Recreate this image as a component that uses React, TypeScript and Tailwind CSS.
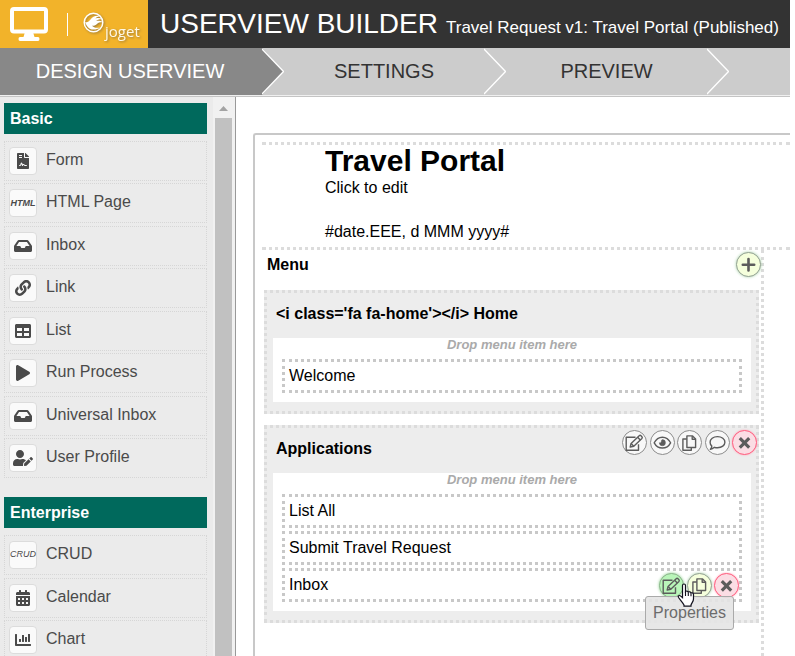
import type { ReactNode } from "react";
import {
  FaCalendarAlt,
  FaChartBar,
  FaFileContract,
  FaInbox,
  FaLink,
  FaPlay,
  FaTable,
  FaUserEdit,
} from "react-icons/fa";

type PaletteItem = { label: string; icon: ReactNode };

const basicItems: PaletteItem[] = [
  { label: "Form", icon: <FaFileContract size={16} /> },
  { label: "HTML Page", icon: <i className="text-[9px] font-bold">HTML</i> },
  { label: "Inbox", icon: <FaInbox size={18} /> },
  { label: "Link", icon: <FaLink size={16} /> },
  { label: "List", icon: <FaTable size={16} /> },
  { label: "Run Process", icon: <FaPlay size={16} /> },
  { label: "Universal Inbox", icon: <FaInbox size={18} /> },
  { label: "User Profile", icon: <FaUserEdit size={20} /> },
];

const enterpriseItems: PaletteItem[] = [
  { label: "CRUD", icon: <i className="text-[9px]">CRUD</i> },
  { label: "Calendar", icon: <FaCalendarAlt size={16} /> },
  { label: "Chart", icon: <FaChartBar size={16} /> },
];

const stroke = {
  width: 23,
  height: 23,
  viewBox: "0 0 23 23",
  fill: "none",
  stroke: "currentColor",
  strokeWidth: 1.4,
  strokeLinejoin: "round" as const,
};

const EditIcon = () => (
  <svg {...stroke}>
    <path d="M12.5 6.3H3.2v12.9h12.3v-6" />
    <path d="M7.2 16l.9-3.6 8.1-7.7c.6-.5 1.3-.4 1.8.1l.9 1c.5.6.5 1.2 0 1.7l-8.1 7.7z" />
    <path d="M14.6 6.2l2.7 2.9M8.1 12.4l2.7 2.8" />
  </svg>
);

const EyeIcon = () => (
  <svg {...stroke}>
    <path d="M3.2 11.8C7 4.3 15.8 4.3 19.6 11.8C15.8 18.8 7 18.8 3.2 11.8z" />
    <path d="M11.4 8.6a3.1 3.1 0 1 1-3.1 3.1c.9.4 1.9-.1 2-1.1.1-.9.2-1.8 1.1-2z" fill="currentColor" strokeWidth="0.4" />
  </svg>
);

const CopyIcon = () => (
  <svg {...stroke}>
    <path d="M8.8 8H4.9v11.3h8.4v-2.8" />
    <path d="M8.9 4.9h5.7l3 3v8.6H8.9z" />
    <path d="M14.2 4.9v3.4h3.4" />
  </svg>
);

const CommentIcon = () => (
  <svg {...stroke}>
    <path d="M11.5 5.6c4.3 0 7.4 2.5 7.4 5.6s-3.1 5.6-7.4 5.6c-1.2 0-2.2-.2-3.1-.5-1 .9-2.2 1.8-4 2 .9-.9 1.4-2 1.4-3.2-1.1-1-1.7-2.4-1.7-3.9 0-3.1 3.1-5.6 7.4-5.6z" />
  </svg>
);

const CloseIcon = () => (
  <svg {...stroke} strokeWidth={3.2}>
    <path d="M6.8 7.2l9.4 9.4M16.2 7.2l-9.4 9.4" />
  </svg>
);

const PlusIcon = () => (
  <svg {...stroke} strokeWidth={2.6} strokeLinecap="round">
    <path d="M11.5 6v11.5M5.8 11.8h11.4" />
  </svg>
);

const tones = {
  plain: "border-[#8c8c8c] bg-[#f8f8f8]",
  lime: "border-[#93a093] bg-[#f5ffdc] shadow-[0_0_3px_#a9d3a9]",
  green: "border-[#8bb38b] bg-[#b9f5b9] shadow-[0_0_3px_#8fcf8f]",
  red: "border-[#ff5f80] bg-[#fbdde4] shadow-[0_0_2px_#ff9fb2]",
};

function RoundButton({ label, tone, children }: { label: string; tone: keyof typeof tones; children: ReactNode }) {
  return (
    <button
      type="button"
      aria-label={label}
      className={`flex size-[25px] shrink-0 items-center justify-center rounded-full border text-[#5c5c5c] ${tones[tone]}`}
    >
      {children}
    </button>
  );
}

function Chevron({ fill }: { fill: string }) {
  return (
    <svg width="22" height="47" viewBox="0 0 22 47" className="shrink-0">
      <path d="M0 0v47L21.5 23.5z" fill={fill} />
      <path d="M0 1L21.5 23.5L0 46" fill="none" stroke="#fff" strokeWidth="1.3" />
    </svg>
  );
}

function Palette({ title, items, height }: { title: string; items: PaletteItem[]; height: string }) {
  return (
    <section>
      <h3 className="mb-[7px] bg-[#00695c] px-1.5 text-base leading-[31px] font-bold text-white">{title}</h3>
      <ul className={`grid content-between ${height}`}>
        {items.map((item) => (
          <li key={item.label} className="flex h-10 items-center gap-[9px] border border-dotted border-[#d6d6d6] px-1">
            <span className="flex size-7 shrink-0 items-center justify-center rounded-[4px] border border-[#dcdcdc] bg-[#fafafa]">
              {item.icon}
            </span>
            <span className="pb-0.5">{item.label}</span>
          </li>
        ))}
      </ul>
    </section>
  );
}

function Category({ title, actions, children }: { title: string; actions?: ReactNode; children: ReactNode }) {
  return (
    <section className="border-3 border-dotted border-[#dcdcdc] bg-[#ededed] pr-[5px] pb-[9px] pl-1.5">
      <div className="flex h-[45px] items-start justify-between pl-[3px]">
        <h4 className="leading-[42px] font-bold">{title}</h4>
        {actions}
      </div>
      <div className="bg-white px-[9px] pb-[9px]">
        <p className="pb-2 text-center text-[13px] leading-[13px] font-bold text-[#aaa] italic">Drop menu item here</p>
        <ul className="grid gap-[3px]">{children}</ul>
      </div>
    </section>
  );
}

function MenuItem({ label, children }: { label: string; children?: ReactNode }) {
  return (
    <li className="relative flex h-[34px] items-center justify-between border-3 border-dotted border-[#c8c8c8] pl-1">
      <span className="pb-px">{label}</span>
      {children}
    </li>
  );
}

function Logo() {
  return (
    <div className="flex w-[148px] shrink-0 items-center bg-[#f2b32a] pl-[10px] text-white">
      <svg width="38" height="34" viewBox="0 0 38 34">
        <rect x="2" y="2" width="34" height="22.5" rx="2" fill="none" stroke="#fff" strokeWidth="4" />
        <path d="M15 25h8l1.5 5h3.5q1.5 0 1.5 2t-1.500 2H10q-1.500 0-1.500-2t1.500-2h3.500z" fill="#fff" />
      </svg>
      <span className="mr-[14px] ml-[19px] h-[23px] w-px bg-white" />
      <svg width="23" height="23" viewBox="0 0 23 23" className="mb-1 drop-shadow-[1px_1px_1px_#9a7a3a]">
        <circle cx="11.5" cy="11.5" r="9.3" fill="none" stroke="#fff" strokeWidth="1.5" />
        <path
          d="M3 11c2 1 4-.5 5.500-2.500C10.500 5.500 14 4 18.500 5.200c-2.500 0-4 1-5 2.200 2.500-.6 5-.5 7 .8-3-.2-5 .4-6.500 1.700 2.500-.3 5 0 7 1.300-3-.2-4.500.3-5.500 1.300-1.500 1.700-3.500 2.500-5.500 2.300 1.500 1.800 4.500 2.500 8 1.700-4 3-10.500 3-13-1.500C4.200 13.800 3.500 12.500 3 11z"
          fill="#fff"
        />
      </svg>
      <span className="mt-3.5 font-['Open_Sans',sans-serif] text-[15px] leading-4 text-[#fff8e6] drop-shadow-[1px_1px_1px_#9a7a3a]">joget</span>
    </div>
  );
}

export default function App() {
  return (
    <div className="flex h-screen flex-col overflow-hidden bg-white pr-[5px] font-['Liberation_Sans',Arial,sans-serif] text-base text-black">
      <header className="flex h-12 shrink-0 bg-[#333] text-white">
        <Logo />
        <h1 className="flex items-baseline gap-2 pl-3 text-[28px] leading-12 whitespace-nowrap">
          USERVIEW BUILDER
          <small className="text-[17px]">Travel Request v1: Travel Portal (Published)</small>
        </h1>
      </header>

      <nav className="flex h-[49px] shrink-0 border-b border-[#c4c4c4] bg-[#ccc] text-xl leading-[46px] text-[#333]">
        <div className="flex w-full border-b border-[#f0f0f0]">
          <a href="#design" className="w-[262px] bg-[#888] pr-0.5 text-center text-white">DESIGN USERVIEW</a>
          <Chevron fill="#888" />
          <a href="#settings" className="w-[200px] text-center">SETTINGS</a>
          <Chevron fill="#ccc" />
          <a href="#preview" className="w-[201px] text-center">PREVIEW</a>
          <Chevron fill="#ccc" />
        </div>
      </nav>

      <div className="flex min-h-0 flex-1">
        <aside className="flex w-[236px] shrink-0 overflow-hidden border-r border-[#999] bg-[#ebebeb] text-[#4a4a4a]">
          <div className="flex w-[213px] flex-col gap-[19px] pt-1.5 pr-1.5 pl-1">
            <Palette title="Basic" items={basicItems} height="h-[337px]" />
            <Palette title="Enterprise" items={enterpriseItems} height="h-[125px]" />
          </div>
          {/* scrollbar */}
          <div className="flex flex-1 flex-col bg-[#f1f1f1] pr-[3px] pl-0.5">
            <svg width="17" height="21" viewBox="0 0 17 21" className="shrink-0">
              <path d="M4 14h9L8.5 9z" fill="#a3a3a3" />
            </svg>
            <div className="flex-1 bg-[#c1c1c1]" />
          </div>
        </aside>

        <main className="flex min-w-0 flex-1 flex-col pt-9 pl-[17px]">
          <div className="flex flex-1 flex-col rounded-tl-[3px] border-t-2 border-l-2 border-[#c8c8c8] pt-[7px] pl-[7px]">
            <div className="h-[108px] border-y-3 border-dotted border-[#dcdcdc] pl-[63px]">
              <h2 className="text-[30px] leading-8 font-bold">Travel Portal</h2>
              <p className="leading-[22px]">Click to edit</p>
              <p className="pt-[22px] leading-[22px]">#date.EEE, d MMM yyyy#</p>
            </div>

            <div className="mr-[26px] flex-1 border-r-3 border-dotted border-[#dcdcdc] pl-0.5">
              <div className="flex h-10 items-start justify-between pt-0.5 pl-[3px]">
                <h3 className="leading-[25px] font-bold">Menu</h3>
                <RoundButton label="Add category" tone="lime"><PlusIcon /></RoundButton>
              </div>
              <div className="grid gap-[11px] pr-0.5">
                <Category title="<i class='fa fa-home'></i> Home">
                  <MenuItem label="Welcome" />
                </Category>
                <Category
                  title="Applications"
                  actions={
                    <div className="-mr-1.5 flex w-[135px] justify-between pt-0.5">
                      <RoundButton label="Edit" tone="plain"><EditIcon /></RoundButton>
                      <RoundButton label="Permission" tone="plain"><EyeIcon /></RoundButton>
                      <RoundButton label="Copy" tone="plain"><CopyIcon /></RoundButton>
                      <RoundButton label="Comment" tone="plain"><CommentIcon /></RoundButton>
                      <RoundButton label="Delete" tone="red"><CloseIcon /></RoundButton>
                    </div>
                  }
                >
                  <MenuItem label="List All" />
                  <MenuItem label="Submit Travel Request" />
                  <MenuItem label="Inbox">
                    <div className="flex w-20 justify-between">
                      <RoundButton label="Properties" tone="green"><EditIcon /></RoundButton>
                      <RoundButton label="Copy" tone="lime"><CopyIcon /></RoundButton>
                      <RoundButton label="Delete" tone="red"><CloseIcon /></RoundButton>
                    </div>
                    <div
                      role="tooltip"
                      className="absolute top-[25px] right-[5px] rounded-[3px] border border-[#aaa] bg-[#e4e4e4]/90 px-[7px] leading-8 text-[#6c6c6c]"
                    >
                      Properties
                    </div>
                    <svg width="20" height="25" viewBox="0 0 20 25" className="absolute top-3 right-[43px]">
                      <path
                        d="M6.5 2.5c0-2 3-2 3 0v6c.8-.8 2.5-.6 2.8.6.9-.7 2.4-.3 2.7.8 1.2-.5 2.5.3 2.5 1.6v4.5c0 2.5-2 4.2-2.500 6v1.200H8v-1.200c-1.500-2.500-3.800-5-5.500-7.500-.9-1.400.7-2.600 2-1.600l2 1.800z"
                        fill="#fff"
                        stroke="#10101c"
                        strokeWidth="1.2"
                      />
                      <path d="M9.5 8.5v4.5M12.3 9.5v3.5M15 10.300v3" stroke="#10101c" strokeWidth="1.1" />
                    </svg>
                  </MenuItem>
                </Category>
              </div>
            </div>
          </div>
        </main>
      </div>
    </div>
  );
}
